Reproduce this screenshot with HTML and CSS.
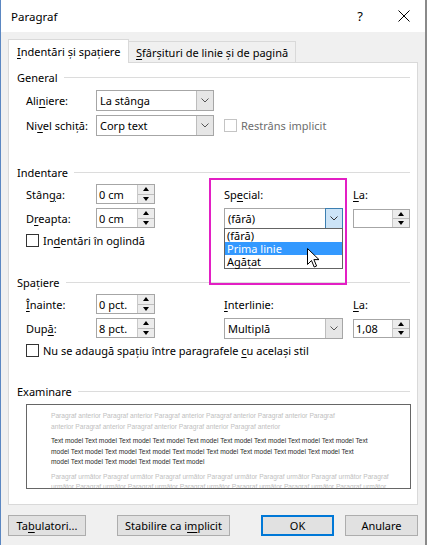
FILE: index.html
```html
<!DOCTYPE html>
<html lang="ro">
<head>
    <meta charset="UTF-8">
    <title>Paragraf</title>
    <link rel="stylesheet" href="styles.css">
</head>
<body>
    <div class="window">
        <div class="titlebar">
            <span class="title">Paragraf</span>
            <span class="help">?</span>
            <svg class="close" width="12" height="12" viewBox="0 0 12 12">
                <path d="M0.5 0.5 L11.5 11.5 M11.5 0.5 L0.5 11.5" stroke="#000" stroke-width="1" fill="none"/>
            </svg>
        </div>

        <div class="tabs">
            <div class="tab active"><span><u>I</u>ndentări și spațiere</span></div>
            <div class="tab"><span><u>S</u>fârșituri de linie și de pagină</span></div>
        </div>

        <div class="panel">
            <div class="legend">General</div>
            <div class="fields general">
                <label>Ali<u>n</u>iere:</label>
                <div class="combo"><span>La stânga</span><span class="drop"><svg width="8" height="5" viewBox="0 0 8 5"><polyline points="0.5,0.5 4,4 7.5,0.5" fill="none" stroke="#555"/></svg></span></div>
                <span></span><span></span>
                <label>Ni<u>v</u>el schiță:</label>
                <div class="combo"><span>Corp text</span><span class="drop"><svg width="8" height="5" viewBox="0 0 8 5"><polyline points="0.5,0.5 4,4 7.5,0.5" fill="none" stroke="#555"/></svg></span></div>
                <div class="check wide disabled"><span class="box"></span><span>Restrâns implicit</span></div>
            </div>

            <div class="legend indent">Indentare</div>
            <div class="fields">
                <label>Stân<u>g</u>a:</label>
                <div class="spin"><span>0 cm</span><span class="arrows"><i class="up"></i><i class="down"></i></span></div>
                <label>Sp<u>e</u>cial:</label>
                <label><u>L</u>a:</label>
                <label>D<u>r</u>eapta:</label>
                <div class="spin"><span>0 cm</span><span class="arrows"><i class="up"></i><i class="down"></i></span></div>
                <div class="combo long focus"><span>(fără)</span><span class="drop"><svg width="8" height="5" viewBox="0 0 8 5"><polyline points="0.5,0.5 4,4 7.5,0.5" fill="none" stroke="#333"/></svg></span></div>
                <div class="spin small"><span></span><span class="arrows"><i class="up"></i><i class="down"></i></span></div>
            </div>
            <div class="check row"><span class="box"></span><span>In<u>d</u>entări în oglindă</span></div>

            <div class="legend spacing">Spațiere</div>
            <div class="fields">
                <label><u>Î</u>nainte:</label>
                <div class="spin"><span>0 pct.</span><span class="arrows"><i class="up"></i><i class="down"></i></span></div>
                <label><u>I</u>nterlinie:</label>
                <label><u>L</u>a:</label>
                <label>Dup<u>ă</u>:</label>
                <div class="spin"><span>8 pct.</span><span class="arrows"><i class="up"></i><i class="down"></i></span></div>
                <div class="combo long"><span>Multiplă</span><span class="drop"><svg width="8" height="5" viewBox="0 0 8 5"><polyline points="0.5,0.5 4,4 7.5,0.5" fill="none" stroke="#555"/></svg></span></div>
                <div class="spin small"><span>1,08</span><span class="arrows"><i class="up"></i><i class="down"></i></span></div>
            </div>
            <div class="check row"><span class="box"></span><span>Nu se adaugă spațiu între paragrafele <u>c</u>u același stil</span></div>

            <div class="legend preview-title">Examinare</div>
            <div class="preview">
                <p class="prev">Paragraf anterior Paragraf anterior Paragraf anterior Paragraf anterior Paragraf anterior Paragraf</p>
                <p class="prev">anterior Paragraf anterior Paragraf anterior Paragraf anterior Paragraf anterior</p>
                <p class="sample gap">Text model Text model Text model Text model Text model Text model Text model Text model Text model Text</p>
                <p class="sample">model Text model Text model Text model Text model Text model Text model Text model Text model Text</p>
                <p class="sample">model Text model Text model Text model Text model</p>
                <p class="prev gap">Paragraf următor Paragraf următor Paragraf următor Paragraf următor Paragraf următor Paragraf următor Paragraf</p>
                <p class="prev">următor Paragraf următor Paragraf următor Paragraf următor Paragraf următor Paragraf următor Paragraf următor</p>
            </div>
        </div>

        <div class="actions">
            <button class="btn tabs-btn">Ta<u>b</u>ulatori...</button>
            <button class="btn default-btn">Stabilire ca i<u>m</u>plicit</button>
            <button class="btn ok-btn">OK</button>
            <button class="btn cancel-btn">Anulare</button>
        </div>

        <!-- open list of the "Special" combo -->
        <ul class="droplist">
            <li>(fără)</li>
            <li class="selected">Prima linie</li>
            <li>Agățat</li>
        </ul>

        <!-- highlight frame round the Special field -->
        <div class="highlight"></div>

        <svg class="pointer" width="13" height="21" viewBox="0 0 13 21">
            <path d="M0.5 0.5 L0.5 16.5 L4.5 12.5 L7.2 19 L9.6 18 L6.9 11.6 L12 11.6 Z" fill="#fff" stroke="#000" stroke-width="1" stroke-linejoin="miter"/>
        </svg>
    </div>
</body>
</html>
```

FILE: styles.css
```css
body {
    margin: 0;
    font-family: "Noto Sans", "Open Sans", sans-serif;
    font-size: 11px;
    color: #000;
}
u {
    text-decoration-thickness: 1px;
    text-underline-offset: 2px;
}
.window {
    position: relative;
    width: 427px;
    height: 545px;
    box-sizing: border-box;
    background-color: #f0f0f0;
    border-left: 1px solid #5b87c2;
    border-right: 2px solid #8a8a8a;
    overflow: hidden;
}

/* title bar */
.titlebar {
    height: 32px;
    background-color: #fff;
    display: flex;
    align-items: center;
    padding-left: 10px;
}
.title {
    flex: 1;
    font-size: 11.5px;
    padding-top: 1px;
}
.help {
    font-size: 13px;
    margin-right: 35px;
}
.close {
    margin-right: 15px;
}

/* tabs */
.tabs {
    height: 30px;
    display: flex;
    align-items: flex-end;
    padding-left: 7px;
}
.tab {
    box-sizing: border-box;
    height: 21px;
    width: 167px;
    padding-left: 7px;
    border: 1px solid #d9d9d9;
    border-left: none;
    border-bottom: none;
    display: flex;
    align-items: center;
    padding-top: 1px;
}
.tab.active {
    position: relative;
    z-index: 1;
    width: 121px;
    height: 24px;
    margin-bottom: -1px;
    padding-left: 8px;
    padding-top: 0;
    border-left: 1px solid #d9d9d9;
    background-color: #fff;
}

/* main panel */
.panel {
    box-sizing: border-box;
    margin-left: 7px;
    width: 410px;
    height: 443px;
    padding: 0 7px 0 8px;
    background-color: #fff;
    border: 1px solid #d9d9d9;
}
.legend {
    height: 16px;
    display: flex;
    align-items: center;
    margin-top: 6px;
}
.legend::after {
    content: "";
    flex: 1;
    border-top: 1px solid #dcdcdc;
    margin-left: 6px;
    margin-top: 1px;
}
.legend.indent {
    margin-top: 28px;
}
.legend.spacing {
    margin-top: 27px;
}
.legend.preview-title {
    margin-top: 26px;
}

.fields {
    display: grid;
    grid-template-columns: 70px 128px 129px 57px;
    grid-auto-rows: 20px;
    row-gap: 4px;
    align-items: center;
    margin: 4px 0 0 9px;
}
.fields.general {
    grid-auto-rows: 21px;
    margin-top: 5px;
}

/* combo boxes */
.combo {
    box-sizing: border-box;
    width: 118px;
    height: 21px;
    border: 1px solid #a6a6a6;
    background-color: #fff;
    display: flex;
    align-items: center;
    padding-left: 3px;
}
.combo.long {
    width: 119px;
}
.combo .drop {
    margin-left: auto;
    align-self: stretch;
    width: 16px;
    background-color: #e6e6e6;
    border-left: 1px solid #bdbdbd;
    display: flex;
    align-items: center;
    justify-content: center;
}
.combo.focus .drop {
    width: 16px;
    background-color: #cce4f7;
    border: 1px solid #3c7fb1;
    margin: -1px -1px -1px auto;
}

/* spin boxes */
.spin {
    box-sizing: border-box;
    width: 59px;
    height: 20px;
    border: 1px solid #a6a6a6;
    background-color: #fff;
    display: flex;
    padding-left: 2px;
    align-items: center;
}
.spin.small {
    width: 57px;
    height: 19px;
}
.spin .arrows {
    margin-left: auto;
    align-self: stretch;
    width: 16px;
    display: flex;
    flex-direction: column;
    border-left: 1px solid #c8c8c8;
    background-color: #ececec;
}
.spin .arrows i {
    flex: 1;
    display: flex;
    align-items: center;
    justify-content: center;
}
.spin .arrows i.up {
    border-bottom: 1px solid #bdbdbd;
}
.spin .arrows i::before {
    content: "";
    width: 0;
    height: 0;
    border-left: 3px solid transparent;
    border-right: 3px solid transparent;
}
.spin .arrows i.up::before {
    border-bottom: 4px solid #000;
}
.spin .arrows i.down::before {
    border-top: 4px solid #000;
}

/* check boxes */
.check {
    display: flex;
    align-items: center;
    gap: 4px;
}
.check.row {
    margin: 6px 0 0 9px;
    height: 13px;
}
.check.wide {
    grid-column: span 2;
}
.check .box {
    box-sizing: border-box;
    width: 13px;
    height: 13px;
    border: 1px solid #333;
    background-color: #fff;
}
.check.disabled {
    color: #6d6d6d;
}
.check.disabled .box {
    border-color: #c4c4c4;
}

/* preview of the paragraph */
.preview {
    box-sizing: border-box;
    margin: 5px 0 0 9px;
    width: 385px;
    height: 85px;
    padding: 6px 0 0 24px;
    border: 1px solid #666;
    overflow: hidden;
    font-family: "Liberation Sans", Arial, sans-serif;
    font-size: 6.65px;
    line-height: 10.5px;
}
.preview p {
    margin: 0;
    white-space: nowrap;
}
.preview .prev {
    color: #c0c0c0;
}
.preview .sample {
    color: #2a2a2a;
}
.preview .gap {
    margin-top: 4px;
}

/* bottom buttons */
.actions {
    display: flex;
    margin-top: 10px;
    padding-left: 7px;
}
.btn {
    box-sizing: border-box;
    height: 21px;
    padding: 0;
    border: 1px solid #adadad;
    background-color: #e1e1e1;
    font-family: inherit;
    font-size: 11px;
    color: #000;
}
.tabs-btn {
    width: 78px;
}
.default-btn {
    width: 113px;
    margin-left: 31px;
}
.ok-btn {
    width: 73px;
    margin-left: 31px;
    border: 2px solid #0078d7;
}
.cancel-btn {
    width: 73px;
    margin-left: 11px;
}

/* overlays */
.droplist {
    position: absolute;
    left: 223px;
    top: 228px;
    width: 119px;
    box-sizing: border-box;
    margin: 0;
    padding: 0;
    list-style: none;
    border: 1px solid #646464;
    background-color: #fff;
}
.droplist li {
    height: 13px;
    line-height: 13px;
    padding-left: 2px;
}
.droplist li.selected {
    background-color: #3399ff;
    color: #fff;
}
.highlight {
    position: absolute;
    left: 208px;
    top: 178px;
    width: 138px;
    height: 107px;
    box-sizing: border-box;
    border: 2px solid #e31fc4;
}
.pointer {
    position: absolute;
    left: 306px;
    top: 248px;
}
```
